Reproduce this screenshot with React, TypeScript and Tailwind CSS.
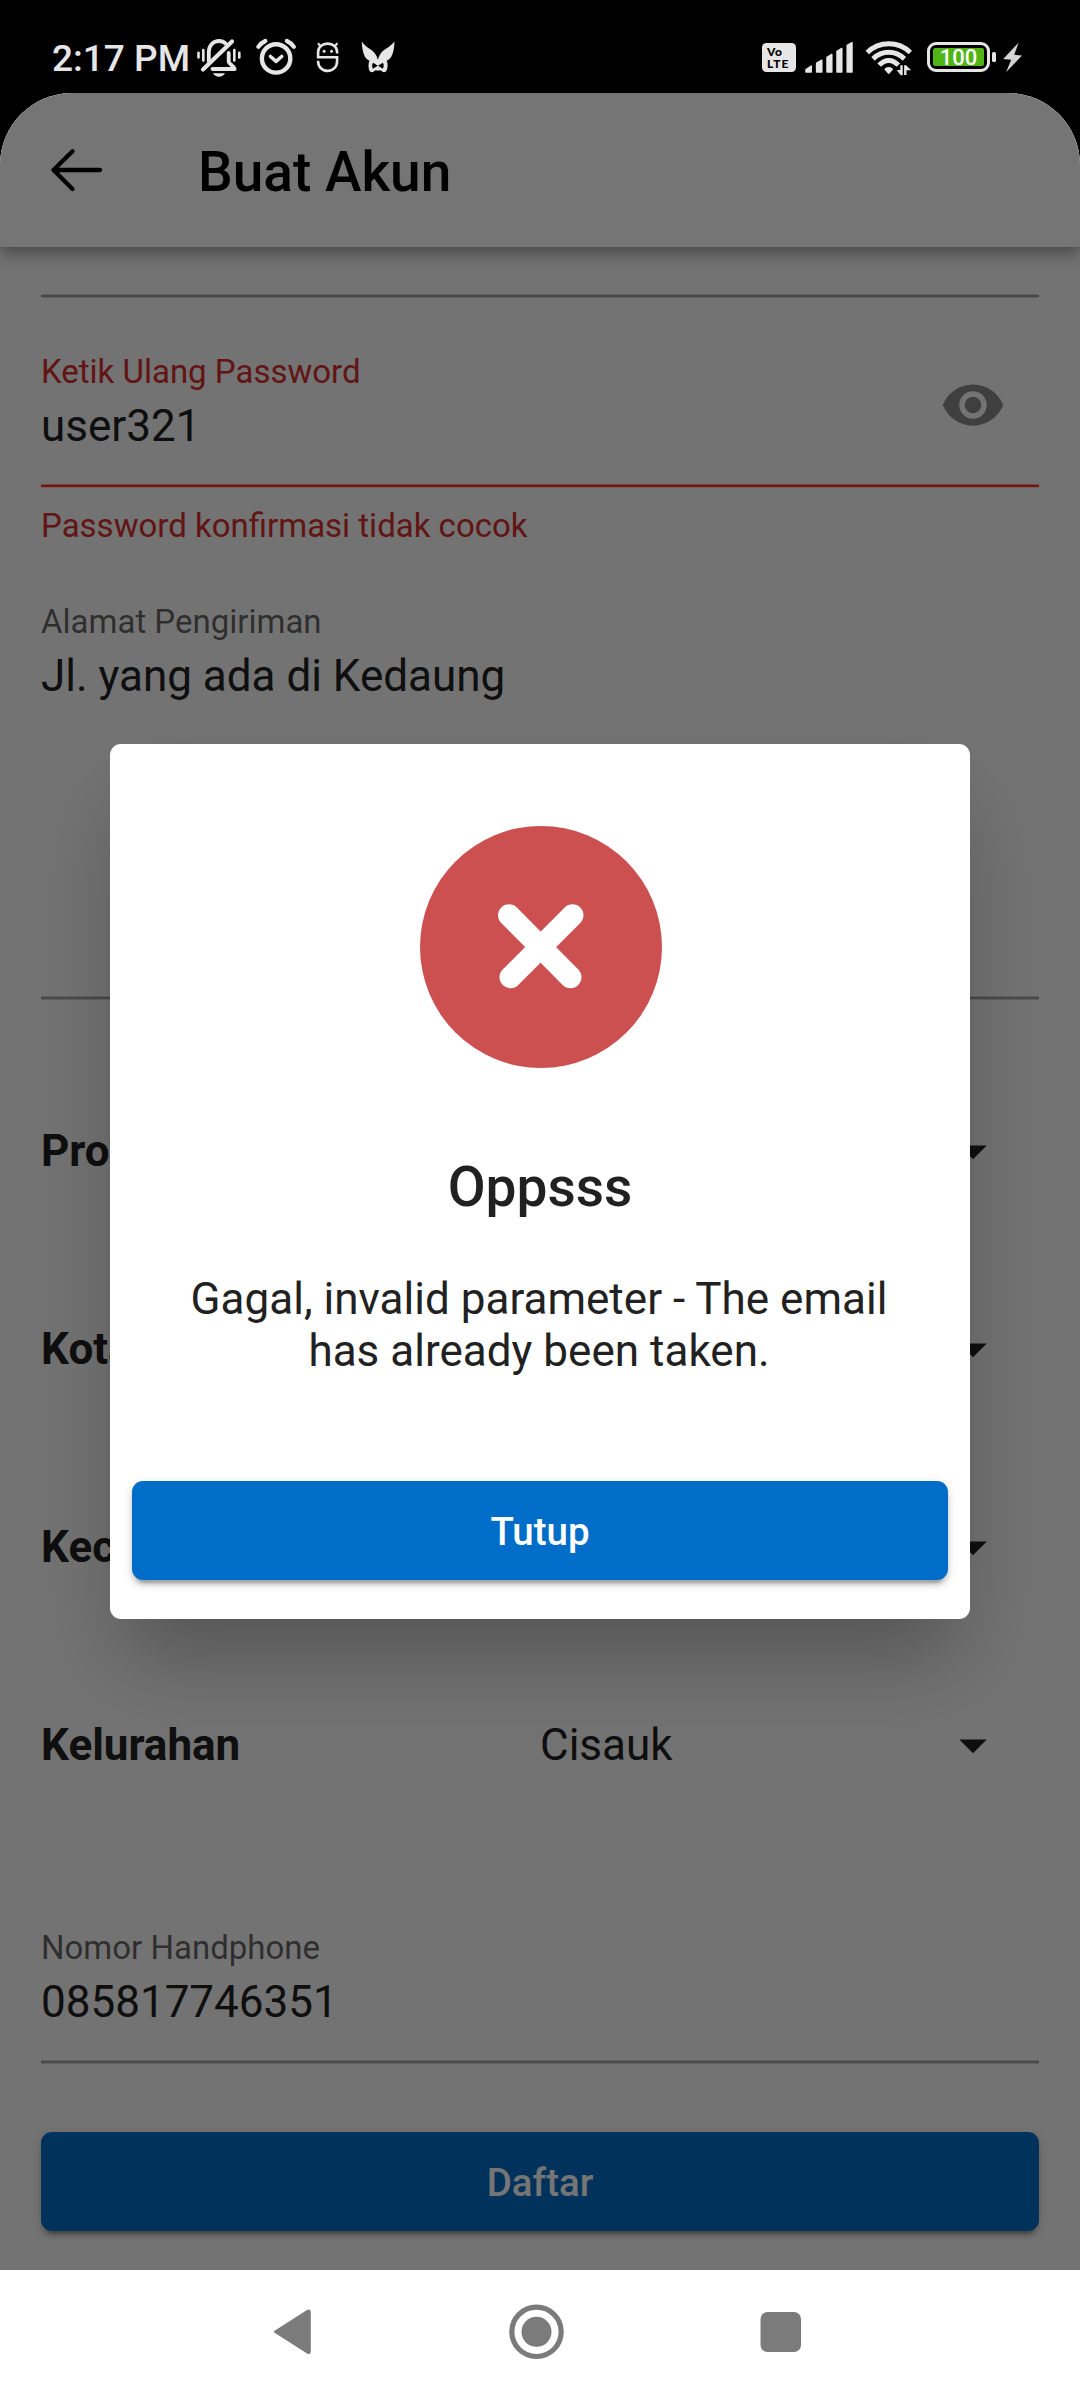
import React from "react";
import { MdArrowDropDown, MdVisibility } from "react-icons/md";

function StatusBar() {
  return (
    <header className="flex h-[93px] shrink-0 items-start justify-between bg-black text-[#e6e6e6]">
      <div className="flex items-start pl-[52px]">
        <span className="mt-[37px] w-[145px] text-[37px] leading-[44px] font-medium whitespace-nowrap">2:17 PM</span>
        <svg className="mt-[36px] h-[44px] w-[46px]" viewBox="198 36 46 44" fill="none" stroke="currentColor" strokeLinecap="round">
          <path d="M199.5 52.8v4.6M204.3 50v10.5M235.3 50v10.5M240.3 52.8v4.6" strokeWidth="2.6" />
          <path d="M209.8 61.5V52c0-6.5 4.5-11 10.3-11 2.6 0 4.9 1 6.6 2.6M229.7 53v8.5c0 2.5 5.6 4.500 6 7.500H213.5" strokeWidth="3.8" strokeLinejoin="round" />
          <path d="M204 69.5L233 41.5" strokeWidth="4.2" />
          <path d="M214 73.300h12c-1.200 2.200-3.400 3.500-6 3.500s-4.800-1.300-6-3.500z" fill="currentColor" stroke="none" />
        </svg>
        <svg className="mt-[36px] ml-[12px] h-[44px] w-[42px]" viewBox="255.5 36 42 44" fill="none" stroke="currentColor">
          <circle cx="276.6" cy="58.4" r="14.2" strokeWidth="4.4" />
          <path d="M271 56.500l5.600 4.800 5.600-4.800" strokeWidth="3.6" strokeLinecap="round" strokeLinejoin="round" />
          <path d="M258.800 46.800c1.600-2.400 4-4.400 7-5.800M294.400 46.800c-1.600-2.400-4-4.400-7-5.800" strokeWidth="4.2" strokeLinecap="round" />
        </svg>
        <svg className="mt-[36px] ml-[18px] h-[44px] w-[26px]" viewBox="315.5 36 26 44" fill="none" stroke="currentColor" strokeWidth="2.6">
          <path d="M337.600 53.500v-1.500c0-5-4-8.400-9.400-8.400s-9.600 3.400-9.600 8.400v5.300h19v4c0 5.600-4 9.600-9.400 9.600s-9.600-4-9.600-9.600v-.5" />
          <path d="M321 46l-2.600-2.800M335.300 46l2.700-2.800" strokeWidth="2" />
          <g fill="currentColor" stroke="none">
            <circle cx="324.6" cy="51.3" r="1.5" />
            <circle cx="332" cy="51.3" r="1.5" />
          </g>
        </svg>
        <svg className="mt-[36px] ml-[18.5px] h-[44px] w-[36px]" viewBox="360 36 36 44" fill="currentColor">
          <path
            fillRule="evenodd"
            d="M361.700 41.500c2.600 4.300 7 6.500 10.700 9.300 2.600 2 4.200 4.700 5.500 9 1.300-4.300 2.700-7 5.200-9 3.700-2.800 8.200-5 11.400-9.300-.2 7-1.300 12-3.500 15.700-1 1.600-2.500 2.600-4.400 3.500.9 1.500 1.200 3.800.9 6.300-.3 3-1.200 5.200-3.300 5.200-1.400 0-2.300-.6-3-1.600h-6.400c-.8 1-1.700 1.600-3.100 1.600-2.100 0-2.900-2.200-3.100-5.200-.2-2.500.1-4.800 1-6.300-2-.9-3.400-1.900-4.300-3.500-2.200-3.700-3.300-8.700-3.600-15.700zM373.200 62.800c-1.300 1.200-1.500 4.200-.3 6l4.900-3zM382.800 62.800l-4.700 3 4.700 3c1.200-1.800 1.200-4.800 0-6z"
          />
        </svg>
      </div>
      <div className="flex items-start pr-[57.5px]">
        <div className="mt-[43px] flex h-[29px] w-[34px] flex-col justify-center rounded-[4.5px] bg-[#e6e6e6] pl-[5px] font-['Lato',sans-serif] text-[12px] leading-[12px] font-black text-black">
          <span className="tracking-[0.5px]">Vo</span>
          <span className="tracking-[1px]">LTE</span>
        </div>
        <svg className="mt-[41px] ml-[9px] h-[33px] w-[49px]" viewBox="805 41 49 33" fill="currentColor" stroke="currentColor" strokeWidth="1.5" strokeLinejoin="round">
          <path d="M806 69.500l5.200-3.500v6h-5.200zM816.600 63.200l5.200-3v11.800h-5.200zM827 57.300l4.800-2.800v17.500h-4.800zM837 51.300l4.800-2.800v23.500h-4.800zM847.200 45.300l4.800-2.600v29.300h-4.800z" />
        </svg>
        <svg className="mt-[38px] ml-[11px] h-[40px] w-[48px]" viewBox="865 38 48 40" fill="none" stroke="currentColor">
          <path d="M867.300 52.500c12-11.600 31-11.600 43 0" strokeWidth="5" />
          <path d="M873 58.800c9.200-8.600 22.200-8.600 31.400 0" strokeWidth="5" />
          <path d="M879.200 65.200c5.600-6.300 13.500-6.300 19.100 0" strokeWidth="5" />
          <path d="M885.500 69.300c2-1.500 4.400-1.500 6.400 0l-3.200 3.600z" fill="currentColor" strokeWidth="2" strokeLinejoin="round" />
          <path d="M896.800 70h3.500v-4.800h2.400v10h-2zM906.500 75h-2.400v-9.700h2l5 5h-4.600z" fill="currentColor" stroke="none" />
        </svg>
        <div className="mt-[42px] ml-[14px] flex h-[30px] w-[63px] items-center rounded-[9px] border-[3px] border-[#e6e6e6] p-[3px]">
          <div className="flex h-[18px] w-full items-center justify-center rounded-[2px] bg-[#50b415] pt-[1px] text-[22px] leading-[18px] font-medium text-white">100</div>
        </div>
        <div className="mt-[52px] ml-[2px] h-[10px] w-[3.5px] rounded-[1.5px] bg-[#e6e6e6]" />
        <svg className="mt-[42px] ml-[7px] h-[31px] w-[20px]" viewBox="1003 42 20 31" fill="#d4d4d4">
          <path d="M1018.700 42.600l-15.500 16.400 8 .8-5.200 12.400 16-16.600-7.800-.8z" />
        </svg>
      </div>
    </header>
  );
}

function AppBar() {
  return (
    <div className="relative flex h-[154px] shrink-0 items-center bg-white pl-[49px] shadow-[0_5px_11px_-2px_rgba(0,0,0,0.22),0_11px_14px_0_rgba(0,0,0,0.13),0_3px_27px_0_rgba(0,0,0,0.11)]">
      <svg className="mb-[1px] h-[46px] w-[56px]" viewBox="49 146 56 46" fill="none" stroke="#000" strokeWidth="4.3" strokeLinecap="round" strokeLinejoin="round">
        <path d="M100 169H53.500M72.500 150.300L53.500 169l19 19" />
      </svg>
      <h1 className="mt-[4px] ml-[93px] text-[55px] leading-[64px] font-medium text-black">Buat Akun</h1>
    </div>
  );
}

function Underline({ error = false }: { error?: boolean }) {
  return (
    <div
      className={
        error
          ? "h-[4px] shrink-0 border-y border-t-[#f44336]/55 border-b-[#f44336]/20 bg-[#ff2d24] bg-clip-padding"
          : "h-[4px] shrink-0 border-y border-black/15 bg-[#9f9f9f] bg-clip-padding"
      }
    />
  );
}

interface FieldProps {
  label: string;
  value: string;
  error?: string;
  tall?: boolean;
  reveal?: boolean;
}

function Field({ label, value, error, tall, reveal }: FieldProps) {
  return (
    <div className="flex flex-col">
      <div className="flex items-center justify-between">
        <div>
          <div className={error ? "text-[33px] leading-[39px] text-[#d32f2f]" : "text-[33px] leading-[39px] text-black/60"}>{label}</div>
          <div className="mt-[9px] text-[44px] leading-[52px] text-[#212121]">{value}</div>
        </div>
        {reveal && <MdVisibility className="mt-[5px] mr-[33px] size-[66px] text-[#8a8a8a]" />}
      </div>
      <div className={tall ? "mt-[294px]" : "mt-[32px]"}>
        <Underline error={!!error} />
      </div>
      {error && <div className="mt-[18px] text-[33px] leading-[39px] text-[#d32f2f]">{error}</div>}
    </div>
  );
}

function SelectRow({ label, value }: { label: string; value?: string }) {
  return (
    <div className="grid h-[198px] grid-cols-2 items-center text-[44px] leading-[52px] text-[#212121]">
      <span className="font-bold">{label}</span>
      <span className="flex items-center justify-between pr-[33.5px]">
        <span>{value}</span>
        <MdArrowDropDown className="size-[66px]" />
      </span>
    </div>
  );
}

function Dialog() {
  return (
    <div className="absolute inset-0 flex items-center justify-center bg-black/54">
      <div className="flex h-[875px] w-[860px] flex-col items-center rounded-[11px] bg-white px-[22px] pt-[82px] text-[#212121] shadow-[0_50px_80px_-14px_rgba(0,0,0,0.27)]">
        <svg className="ml-[1px] size-[242px] shrink-0" viewBox="0 0 242 242">
          <circle cx="121" cy="121" r="121" fill="#cc5050" />
          <path d="M89 89.200L150.500 151.300M152.500 89.200L90.500 151.300" stroke="#fff" strokeWidth="22" strokeLinecap="round" />
        </svg>
        <h2 className="mt-[87px] text-[55px] leading-[64px] font-medium">Oppsss</h2>
        <p className="mt-[54px] mr-[2px] text-center text-[44px] leading-[52px] tracking-[0.02px]">
          Gagal, invalid parameter - The email
          <br />
          has already been taken.
        </p>
        <button className="mt-[104px] h-[99px] w-full rounded-[11px] bg-[#006ec8] pt-[1px] text-[38.5px] leading-[45px] font-medium text-white shadow-[0_8px_3px_-5px_rgba(0,0,0,0.2),0_5px_5px_0_rgba(0,0,0,0.14),0_3px_12px_0_rgba(0,0,0,0.12)]">
          Tutup
        </button>
      </div>
    </div>
  );
}

function NavBar() {
  return (
    <nav className="h-[130px] shrink-0 bg-white">
      <svg className="h-[130px] w-[1080px]" viewBox="0 2270 1080 130" fill="#7b7b7b">
        <path d="M275 2330.500l32-20.500q3.800-1.800 3.800 2v39.500q0 3.800-3.800 2l-32-20.500q-2.200-1.300 0-2.500z" />
        <circle cx="536.5" cy="2331.8" r="24.7" fill="none" stroke="#7b7b7b" strokeWidth="5.2" />
        <circle cx="536.5" cy="2331.8" r="15" />
        <rect x="760.5" y="2312" width="40.5" height="40" rx="7" />
      </svg>
    </nav>
  );
}

export default function App() {
  return (
    <div className="flex h-[2400px] w-[1080px] flex-col bg-black font-['Roboto',sans-serif]">
      <StatusBar />
      <main className="relative flex h-[2177px] flex-col overflow-hidden rounded-t-[72px] bg-[#fafafa]">
        <AppBar />
        <div className="flex flex-col px-[41px] pt-[47px]">
          <Underline />
          <div className="mt-[54px]">
            <Field label="Ketik Ulang Password" value="user321" error="Password konfirmasi tidak cocok" reveal />
          </div>
          <div className="mt-[57px]">
            <Field label="Alamat Pengiriman" value="Jl. yang ada di Kedaung" tall />
          </div>
          <div className="mt-[52px]">
            <SelectRow label="Provinsi" />
            <SelectRow label="Kota" />
            <SelectRow label="Kecamatan" />
            <SelectRow label="Kelurahan" value="Cisauk" />
          </div>
          <div className="mt-[84px]">
            <Field label="Nomor Handphone" value="085817746351" />
          </div>
          <button className="mt-[68px] h-[99px] rounded-[11px] bg-[#006ec8] pt-[1px] text-[38.5px] leading-[45px] font-medium text-white shadow-[0_8px_3px_-5px_rgba(0,0,0,0.2),0_5px_5px_0_rgba(0,0,0,0.14),0_3px_12px_0_rgba(0,0,0,0.12)]">
            Daftar
          </button>
        </div>
        <Dialog />
      </main>
      <NavBar />
    </div>
  );
}
